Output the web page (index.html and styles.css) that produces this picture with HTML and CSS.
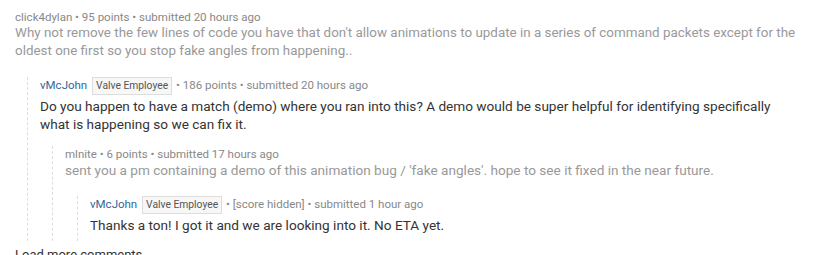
FILE: index.html
```html
<!DOCTYPE html>
<html lang="en">
<head>
    <meta charset="UTF-8">
    <title>Comments</title>
    <link rel="stylesheet" href="styles.css">
</head>
<body>
    <div class="thread">
        <div class="comment low top">
            <div class="tagline">
                <a class="author">click4dylan</a> • 95 points • submitted 20 hours ago
            </div>
            <div class="body">Why not remove the few lines of code you have that don't allow animations to update in a series of command packets except for the oldest one first so you stop fake angles from happening..</div>

            <div class="child">
                <div class="comment flaired">
                    <div class="tagline">
                        <a class="author blue">vMcJohn</a>
                        <span class="flair">Valve Employee</span> • 186 points • submitted 20 hours ago
                    </div>
                    <div class="body">Do you happen to have a match (demo) where you ran into this? A demo would be super helpful for identifying specifically what is happening so we can fix it.</div>

                    <div class="child">
                        <div class="comment low">
                            <div class="tagline">
                                <a class="author">mlnite</a> • 6 points • submitted 17 hours ago
                            </div>
                            <div class="body">sent you a pm containing a demo of this animation bug / 'fake angles'. hope to see it fixed in the near future.</div>

                            <div class="child">
                                <div class="comment flaired leaf">
                                    <div class="tagline">
                                        <a class="author blue">vMcJohn</a>
                                        <span class="flair">Valve Employee</span> • [score hidden] • submitted 1 hour ago
                                    </div>
                                    <div class="body">Thanks a ton! I got it and we are looking into it. No ETA yet.</div>
                                </div>
                            </div>
                        </div>
                    </div>
                </div>
            </div>
        </div>
        <div class="more">Load more comments</div>
    </div>
</body>
</html>
```

FILE: styles.css
```css
body {
    margin: 0;
    background: #fff;
    font-family: Roboto, 'Liberation Sans', Arial, sans-serif;
}
.thread {
    padding: 9px 16px 0 15px;
}
.tagline {
    font-size: 11.5px;
    color: #888;
    line-height: 16px;
    margin-bottom: -1px;
}
.author {
    color: #888;
}
.author.blue {
    color: #369;
}
.flair {
    display: inline-block;
    font-size: 10.3px;
    color: #555;
    background: #f7f7f7;
    border: 1px solid #ddd;
    padding: 0 3px;
    line-height: 16px;
    margin: 0 1px 0 2px;
}
.flaired > .tagline {
    margin-bottom: 2px;
}
.body {
    font-size: 13.6px;
    line-height: 18px;
    color: #333;
    padding-bottom: 17px;
}
.top > .body {
    font-size: 13.4px;
}
.flaired > .body {
    padding-bottom: 13px;
}
.leaf > .body {
    padding-bottom: 7px;
}
.low > .body {
    color: #999;
}
.child {
    margin-left: 12px;
    border-left: 1px dashed #ddd;
    padding-left: 12px;
}
.more {
    font-size: 13px;
    line-height: 18px;
    margin-top: 5px;
    color: #333;
}
```
